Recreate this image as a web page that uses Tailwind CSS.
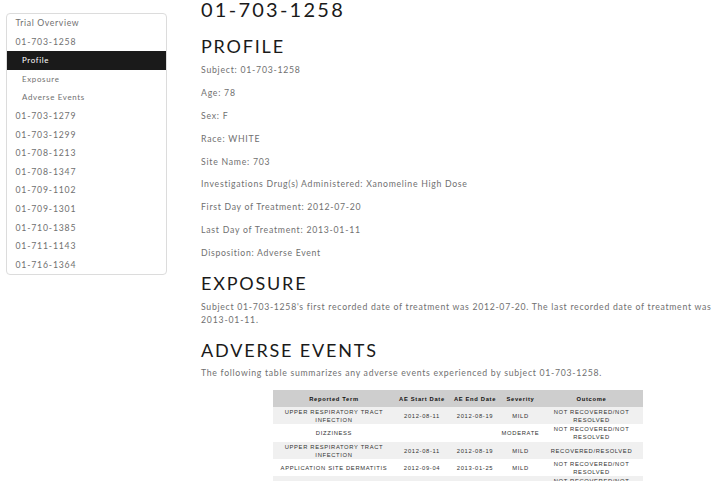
<!DOCTYPE html>
<html lang="en">
<head>
<meta charset="utf-8">
<title>01-703-1258</title>
<script src="https://cdn.jsdelivr.net/npm/@tailwindcss/browser@4"></script>
</head>
<body class="bg-white overflow-hidden h-[481px]">
<div class="flex h-[481px] w-[720px] overflow-hidden font-['Lato','Noto_Sans',sans-serif] text-[8.7px] leading-[13px] tracking-[0.76px] text-[#707070]">
  <nav class="ml-[6px] mt-[13px] flex h-[262px] w-[161px] shrink-0 flex-col rounded-[4px] border border-[#dcdcdc] text-[8.7px] leading-[18.6px] tracking-[0.82px] *:h-[18.6px] *:shrink-0 *:pl-[8.5px]">
    <a class="tracking-[0.63px]">Trial Overview</a>
    <a>01-703-1258</a>
    <a class="bg-[#1a1a1a] text-white !pl-[15px] text-[7.9px] tracking-[0.68px]">Profile</a>
    <a class="!pl-[15px] text-[7.9px] tracking-[0.68px]">Exposure</a>
    <a class="!pl-[15px] text-[7.9px] tracking-[0.68px]">Adverse Events</a>
    <a>01-703-1279</a>
    <a>01-703-1299</a>
    <a>01-708-1213</a>
    <a>01-708-1347</a>
    <a>01-709-1102</a>
    <a>01-709-1301</a>
    <a>01-710-1385</a>
    <a>01-711-1143</a>
    <a>01-716-1364</a>
  </nav>
  <main class="ml-[34px] w-[519px] shrink-0">
    <h1 class="h-[34px] text-[20px] leading-[19px] tracking-[2.25px] text-[#1a1a1a]">01-703-1258</h1>
    <h2 class="h-[29px] text-[18px] leading-[24px] tracking-[1.8px] text-[#1a1a1a]">PROFILE</h2>
    <div class="flex h-[207px] flex-col gap-[9.9px]">
      <p>Subject: 01-703-1258</p>
      <p>Age: 78</p>
      <p>Sex: F</p>
      <p>Race: WHITE</p>
      <p>Site Name: 703</p>
      <p class="tracking-[0.71px]">Investigations Drug(s) Administered: Xanomeline High Dose</p>
      <p class="tracking-[0.71px]">First Day of Treatment: 2012-07-20</p>
      <p>Last Day of Treatment: 2013-01-11</p>
      <p class="tracking-[0.68px]">Disposition: Adverse Event</p>
    </div>
    <h2 class="h-[30px] text-[18px] leading-[26px] tracking-[1.8px] text-[#1a1a1a]">EXPOSURE</h2>
    <p class="h-[37px] whitespace-nowrap tracking-[0.715px]">Subject 01-703-1258's first recorded date of treatment was 2012-07-20. The last recorded date of treatment was<br><span class="tracking-[0.82px]">2013-01-11.</span></p>
    <h2 class="h-[29px] text-[18px] leading-[26px] tracking-[1.83px] text-[#1a1a1a]">ADVERSE EVENTS</h2>
    <p class="h-[24px] whitespace-nowrap tracking-[0.715px]">The following table summarizes any adverse events experienced by subject 01-703-1258.</p>
    <table class="ml-[72px] w-[370px] table-fixed border-collapse whitespace-nowrap text-center font-['Liberation_Sans',Arial,sans-serif] text-[5.8px] leading-[8.6px] tracking-[0.67px] text-[#333] [&_td]:p-0 [&_td]:pt-[1px] [&_th]:p-0 [&_th]:pt-[1px]">
      <colgroup><col class="w-[122px]"><col class="w-[54px]"><col class="w-[52px]"><col class="w-[39px]"><col class="w-[103px]"></colgroup>
      <thead><tr class="h-[17px] bg-[#cecece] text-[#111]"><th>Reported Term</th><th>AE Start Date</th><th>AE End Date</th><th>Severity</th><th>Outcome</th></tr></thead>
      <tbody class="*:h-[17.3px] *:odd:bg-[#f0f0f0] leading-[8.1px]">
        <tr><td>UPPER RESPIRATORY TRACT<br>INFECTION</td><td>2012-08-11</td><td>2012-08-19</td><td>MILD</td><td>NOT RECOVERED/NOT<br>RESOLVED</td></tr>
        <tr><td>DIZZINESS</td><td></td><td></td><td>MODERATE</td><td>NOT RECOVERED/NOT<br>RESOLVED</td></tr>
        <tr><td>UPPER RESPIRATORY TRACT<br>INFECTION</td><td>2012-08-11</td><td>2012-08-19</td><td>MILD</td><td>RECOVERED/RESOLVED</td></tr>
        <tr><td>APPLICATION SITE DERMATITIS</td><td>2012-09-04</td><td>2013-01-25</td><td>MILD</td><td>NOT RECOVERED/NOT<br>RESOLVED</td></tr>
        <tr><td></td><td></td><td></td><td></td><td>NOT RECOVERED/NOT<br>RESOLVED</td></tr>
      </tbody>
    </table>
  </main>
</div>
</body>
</html>
